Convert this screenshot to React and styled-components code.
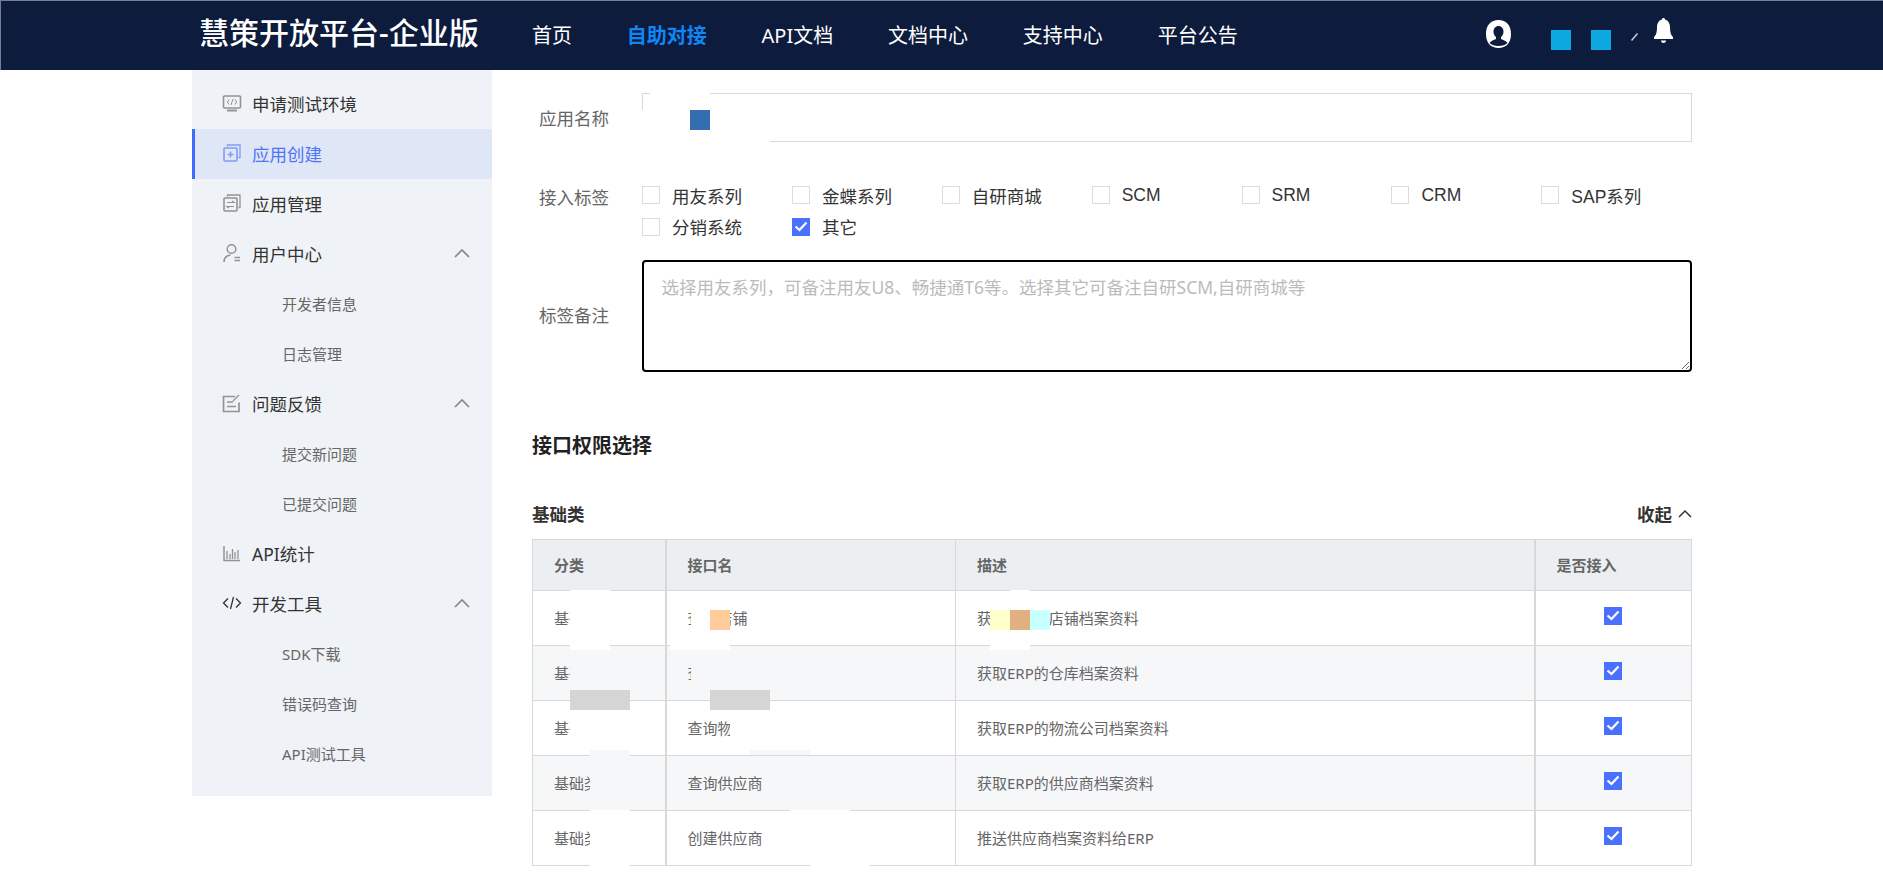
import React from 'react';
import styled, { createGlobalStyle } from 'styled-components';

const FONT = '"Noto Sans", "Noto Sans CJK SC", "Liberation Sans", sans-serif';

const GlobalStyle = createGlobalStyle`
  html, body {
    margin: 0;
    padding: 0;
    background: #fff;
    font-family: ${FONT};
  }
  * {
    box-sizing: border-box;
  }
`;

const Page = styled.div`
  position: relative;
  width: 1883px;
  height: 873px;
  overflow: hidden;
`;

const Header = styled.header`
  display: flex;
  align-items: center;
  height: 70px;
  padding-left: 198px;
  background: #0d1b3d;
  border-top: 1px solid #757d90;
  border-left: 1px solid #757d90;
`;

const Logo = styled.div`
  width: 333px;
  margin-top: -6px;
  font-size: 30px;
  font-weight: 500;
  line-height: 40px;
  color: #fff;
`;

const Nav = styled.nav`
  display: flex;
  gap: 54.8px;
`;

const NavItem = styled.a`
  font-size: 20px;
  line-height: 28px;
  color: ${({ $active }) => ($active ? '#0f87f5' : '#fff')};
  font-weight: ${({ $active }) => ($active ? 700 : 400)};
`;

const HeaderRight = styled.div`
  display: flex;
  align-items: flex-start;
  height: 100%;
  margin-left: 248px;
  padding-top: 17px;
`;

const Square = styled.span`
  width: 20px;
  height: 20px;
  margin-top: 12px;
  margin-right: 20px;
  background: #0ea8e0;
`;

const UserIcon = styled.svg`
  width: 25px;
  height: 28px;
  margin-top: 2px;
  margin-right: 40px;
`;

const Slash = styled.svg`
  width: 7px;
  height: 8px;
  margin-top: 15px;
  margin-right: 16px;
`;

const BellIcon = styled.svg`
  width: 19px;
  height: 26px;
`;

const Body = styled.div`
  display: flex;
  align-items: flex-start;
  padding-left: 192px;
`;

const Sidebar = styled.aside`
  width: 300px;
  padding: 9px 0 17px;
  background: #eff2f6;
`;

const SideRow = styled.div`
  display: flex;
  align-items: center;
  height: 50px;
  padding-left: ${({ $active }) => ($active ? '27px' : '30px')};
  padding-bottom: 2px;
  background: ${({ $active }) => ($active ? '#dfe6f5' : 'transparent')};
  border-left: ${({ $active }) => ($active ? '3px solid #3f6cff' : 'none')};
  font-size: 17.5px;
  color: ${({ $active }) => ($active ? '#4d75f5' : '#333')};
`;

const SideIcon = styled.svg`
  flex: none;
  width: 20px;
  height: 20px;
  margin-right: 10px;
  color: ${({ $active }) => ($active ? '#7f9cf5' : '#939393')};
`;

const Chevron = styled.svg`
  flex: none;
  width: 16px;
  height: 10px;
  margin-left: auto;
  margin-right: 22px;
  color: #888;
`;

const SubRow = styled.div`
  display: flex;
  align-items: center;
  height: 50px;
  padding-left: 90px;
  padding-bottom: 2px;
  font-size: 15px;
  color: #666;
`;

const Main = styled.main`
  width: 1160px;
  margin-left: 40px;
  padding-top: 23px;
`;

const FormRow = styled.div`
  display: flex;
  align-items: ${({ $top }) => ($top ? 'flex-start' : 'center')};
  margin-bottom: ${({ $gap }) => $gap}px;
`;

const FormLabel = styled.label`
  flex: none;
  width: 110px;
  padding-left: 7px;
  padding-top: ${({ $drop }) => $drop || 0}px;
  padding-bottom: ${({ $lift }) => $lift || 0}px;
  font-size: 17.5px;
  line-height: 26px;
  color: #666;
`;

const TextInput = styled.input`
  width: 1050px;
  height: 49px;
  border: 1px solid #d8d8d8;
  outline: none;
  background: #fff;
`;

const TagGrid = styled.div`
  display: grid;
  grid-template-columns: repeat(7, 149.9px);
  grid-auto-rows: 31.5px;
`;

const Tag = styled.div`
  display: flex;
  align-items: center;
  padding-bottom: 1px;
  font-family: "Liberation Sans", "Noto Sans CJK SC", sans-serif;
  font-size: 17.5px;
  color: #333;
`;

const CheckBox = styled.span`
  display: flex;
  flex: none;
  align-items: center;
  justify-content: center;
  width: 18px;
  height: 18px;
  margin-right: ${({ $gap }) => $gap || 0}px;
  background: ${({ $checked }) => ($checked ? '#4a70ff' : '#fff')};
  border: ${({ $checked }) => ($checked ? 'none' : '1px solid #dcdcdc')};
`;

const Remark = styled.textarea`
  display: block;
  width: 1050px;
  height: 112px;
  padding: 11px 17.5px;
  border: 2.5px solid #000;
  border-radius: 4px;
  outline: none;
  font-family: ${FONT};
  font-size: 17.5px;
  line-height: 28px;
  &::placeholder {
    color: #bbb;
  }
`;

const SectionTitle = styled.h2`
  margin: 59px 0 40px;
  font-size: 20px;
  font-weight: 700;
  line-height: 30px;
  color: #222;
`;

const GroupHead = styled.div`
  display: flex;
  align-items: center;
  justify-content: space-between;
  height: 24px;
  margin-bottom: 14px;
  font-size: 17.5px;
  font-weight: 700;
  color: #333;
`;

const Collapse = styled.span`
  display: flex;
  align-items: center;
  gap: 6px;
`;

const CollapseIcon = styled.svg`
  width: 14px;
  height: 9px;
  color: #333;
`;

const Table = styled.table`
  width: 1159px;
  border-collapse: collapse;
  table-layout: fixed;
  font-size: 15px;
  color: #666;
`;

const Th = styled.th`
  width: ${({ $w }) => $w}px;
  height: 51px;
  padding: 0 0 2px 21px;
  background: #eceff2;
  border: 1px solid #d8d8d8;
  border-left-width: ${({ $thick }) => ($thick ? 2 : 1)}px;
  font-weight: 700;
  text-align: left;
`;

const Td = styled.td`
  height: 55px;
  padding: 0 0 2px 21px;
  border: 1px solid #d8d8d8;
  border-left-width: ${({ $thick }) => ($thick ? 2 : 1)}px;
  background: ${({ $alt }) => ($alt ? '#f6f7f9' : '#fff')};
`;

const CheckCell = styled(Td)`
  padding: 0 0 5px;
  & > span {
    margin: 0 auto;
  }
`;

// redaction patches lying over the screenshot content
const Mask = styled.div`
  position: absolute;
  left: ${({ $x }) => $x}px;
  top: ${({ $y }) => $y}px;
  width: ${({ $w }) => $w}px;
  height: ${({ $h }) => $h}px;
  background: ${({ $c }) => $c};
`;

const MASKS = [
  [650, 92, 60, 18, '#fff'],
  [641, 110, 49, 33, '#fff'],
  [710, 110, 60, 33, '#fff'],
  [690, 130, 20, 13, '#fff'],
  [690, 110, 20, 20, '#356eb0'],
  [570, 590, 40, 60, '#fff'],
  [570, 650, 60, 40, '#f6f7f9'],
  [570, 690, 60, 20, '#d5d5d5'],
  [570, 710, 60, 40, '#fff'],
  [590, 750, 40, 60, '#f6f7f9'],
  [590, 810, 40, 60, '#fff'],
  [691, 600, 19, 45, '#fff'],
  [710, 610, 20, 20, '#ffcc99'],
  [670, 645, 60, 5, '#fff'],
  [691, 650, 59, 40, '#f6f7f9'],
  [710, 690, 60, 20, '#d5d5d5'],
  [730, 710, 60, 40, '#fff'],
  [750, 750, 60, 5, '#f6f7f9'],
  [790, 810, 60, 5, '#fff'],
  [810, 865, 60, 8, '#fff'],
  [990, 610, 20, 20, '#ffffcc'],
  [1010, 610, 20, 20, '#e0b080'],
  [1030, 610, 20, 20, '#c8ffff'],
  [1010, 590, 20, 20, '#fff'],
  [990, 630, 40, 20, '#fff'],
];

const MonitorGlyph = () => (
  <>
    <rect x="1.500" y="3" width="17" height="12" rx="1" fill="none" stroke="currentColor" strokeWidth="1.600" />
    <path d="M5 17.500h10" stroke="currentColor" strokeWidth="2" />
    <path d="M7 6.500 5.500 9 7 11.500M13 6.500 14.500 9 13 11.500M11 6 9 12" fill="none" stroke="currentColor" strokeWidth="1" />
  </>
);

const CreateGlyph = () => (
  <>
    <path d="M5.500 3.500V2h12.500v12.500h-1.500" fill="none" stroke="currentColor" strokeWidth="1.300" />
    <rect x="2" y="5" width="13" height="13" rx="1" fill="none" stroke="currentColor" strokeWidth="1.600" />
    <path d="M8.500 8.500v6M5.500 11.500h6" stroke="currentColor" strokeWidth="1.600" />
  </>
);

const ManageGlyph = () => (
  <>
    <path d="M5.500 3.500V2h12.500v12.500h-1.500" fill="none" stroke="currentColor" strokeWidth="1.300" />
    <rect x="2" y="5" width="13" height="13" rx="1" fill="none" stroke="currentColor" strokeWidth="1.600" />
    <path d="M5 9.500h7l-2-1.500M12 13.500H5l2 1.500" fill="none" stroke="currentColor" strokeWidth="1.200" />
  </>
);

const UserGlyph = () => (
  <>
    <circle cx="9.500" cy="6" r="4.300" fill="none" stroke="currentColor" strokeWidth="1.500" />
    <path d="M2 19c0-4.500 2.500-6.500 6.500-7" fill="none" stroke="currentColor" strokeWidth="1.700" />
    <path d="M12.500 14.500h5.500M12.500 17.500h5.500" stroke="currentColor" strokeWidth="1.400" />
  </>
);

const FeedbackGlyph = () => (
  <>
    <path d="M17 9.500V18.500H1.500V3.500H13" fill="none" stroke="currentColor" strokeWidth="1.700" />
    <path d="M5 9h6M5 13.500h9M11 8l6-6" fill="none" stroke="currentColor" strokeWidth="1.400" />
  </>
);

const ChartGlyph = () => (
  <>
    <path d="M2 3v14.500h16" fill="none" stroke="currentColor" strokeWidth="1.500" />
    <path d="M5 8v8M8 11v5M10.500 6v10M13 9v7M16 7v9" stroke="currentColor" strokeWidth="1.300" />
  </>
);

const CodeGlyph = () => (
  <path d="M6 5.500 1.500 10 6 14.500M14 5.500 18.500 10 14 14.500M11.500 4 8.500 16" fill="none" stroke="#333" strokeWidth="1.300" />
);

const SIDE_ITEMS = [
  { label: '申请测试环境', Glyph: MonitorGlyph },
  { label: '应用创建', Glyph: CreateGlyph, active: true },
  { label: '应用管理', Glyph: ManageGlyph },
  { label: '用户中心', Glyph: UserGlyph, subs: ['开发者信息', '日志管理'] },
  { label: '问题反馈', Glyph: FeedbackGlyph, subs: ['提交新问题', '已提交问题'] },
  { label: 'API统计', Glyph: ChartGlyph },
  { label: '开发工具', Glyph: CodeGlyph, subs: ['SDK下载', '错误码查询', 'API测试工具'] },
];

const NAV_ITEMS = ['首页', '自助对接', 'API文档', '文档中心', '支持中心', '平台公告'];
const TAGS = ['用友系列', '金蝶系列', '自研商城', 'SCM', 'SRM', 'CRM', 'SAP系列', '分销系统', '其它'];

const ROWS = [
  ['基础类', '查询店铺', '获取ERP的店铺档案资料'],
  ['基础类', '查询仓库', '获取ERP的仓库档案资料'],
  ['基础类', '查询物流公司', '获取ERP的物流公司档案资料'],
  ['基础类', '查询供应商', '获取ERP的供应商档案资料'],
  ['基础类', '创建供应商', '推送供应商档案资料给ERP'],
];

const Tick = () => (
  <svg width="14" height="11" viewBox="0 0 14 11">
    <path d="M1.500 5.500 5.500 9 12.500 1.500" fill="none" stroke="#fff" strokeWidth="2.200" />
  </svg>
);

function Side() {
  return (
    <Sidebar>
      {SIDE_ITEMS.map(({ label, Glyph, active, subs }) => (
        <React.Fragment key={label}>
          <SideRow $active={active}>
            <SideIcon $active={active} viewBox="0 0 20 20">
              <Glyph />
            </SideIcon>
            {label}
            {subs && (
              <Chevron viewBox="0 0 16 10">
                <path d="M1 9 8 2l7 7" fill="none" stroke="currentColor" strokeWidth="1.700" />
              </Chevron>
            )}
          </SideRow>
          {subs && subs.map((sub) => <SubRow key={sub}>{sub}</SubRow>)}
        </React.Fragment>
      ))}
    </Sidebar>
  );
}

export default function App() {
  return (
    <Page>
      <GlobalStyle />
      <Header>
        <Logo>慧策开放平台-企业版</Logo>
        <Nav>
          {NAV_ITEMS.map((item) => (
            <NavItem key={item} $active={item === '自助对接'}>
              {item}
            </NavItem>
          ))}
        </Nav>
        <HeaderRight>
          <UserIcon viewBox="0 0 25 28">
            <path
              fillRule="evenodd"
              fill="#fff"
              d="M12.500 0C20 0 25 5 25 14s-5 14-12.500 14S0 23 0 14 5 0 12.500 0Zm0 6c-3 0-5 2.500-5 5.500 0 2.500 1 4.500 2.500 5.500v2c-2.500 1-5.500 2-6.500 4 2 2 5 3 9 3s7-1 9-3c-1-2-4-3-6.500-4v-2c1.500-1 2.500-3 2.500-5.500C17.500 8.500 15.500 6 12.500 6Z"
            />
          </UserIcon>
          <Square />
          <Square />
          <Slash viewBox="0 0 7 8">
            <path d="M.5 7.500 6.500.5" stroke="#cfd3db" strokeWidth="1.500" />
          </Slash>
          <BellIcon viewBox="0 0 19 26">
            <path
              fill="#fff"
              d="M9.500 0c1 0 1.500.6 1.500 1.500C14.500 2.500 16 5.500 16 9.500c0 5 1 7.500 3 9.500v2H0v-2c2-2 3-4.500 3-9.500C3 5.500 4.500 2.500 8 1.500 8 .6 8.500 0 9.500 0ZM7 22.500h5c0 1.500-1 2.500-2.500 2.500S7 24 7 22.500Z"
            />
          </BellIcon>
        </HeaderRight>
      </Header>
      <Body>
        <Side />
        <Main>
          <FormRow $gap={38}>
            <FormLabel>应用名称</FormLabel>
            <TextInput readOnly />
          </FormRow>
          <FormRow $gap={17} $top>
            <FormLabel $drop={4}>接入标签</FormLabel>
            <TagGrid>
              {TAGS.map((tag) => (
                <Tag key={tag}>
                  <CheckBox $gap={12} $checked={tag === '其它'}>
                    {tag === '其它' && <Tick />}
                  </CheckBox>
                  {tag}
                </Tag>
              ))}
            </TagGrid>
          </FormRow>
          <FormRow $gap={0}>
            <FormLabel $lift={2}>标签备注</FormLabel>
            <Remark placeholder="选择用友系列，可备注用友U8、畅捷通T6等。选择其它可备注自研SCM,自研商城等" />
          </FormRow>
          <SectionTitle>接口权限选择</SectionTitle>
          <GroupHead>
            基础类
            <Collapse>
              收起
              <CollapseIcon viewBox="0 0 14 9">
                <path d="M1 8 7 2l6 6" fill="none" stroke="currentColor" strokeWidth="1.500" />
              </CollapseIcon>
            </Collapse>
          </GroupHead>
          <Table>
            <thead>
              <tr>
                <Th $w={133}>分类</Th>
                <Th $w={290} $thick>接口名</Th>
                <Th $w={579}>描述</Th>
                <Th $w={157} $thick>是否接入</Th>
              </tr>
            </thead>
            <tbody>
              {ROWS.map((row, i) => (
                <tr key={row[1]}>
                  <Td $alt={i % 2 === 1}>{row[0]}</Td>
                  <Td $alt={i % 2 === 1} $thick>{row[1]}</Td>
                  <Td $alt={i % 2 === 1}>{row[2]}</Td>
                  <CheckCell $alt={i % 2 === 1} $thick>
                    <CheckBox $checked>
                      <Tick />
                    </CheckBox>
                  </CheckCell>
                </tr>
              ))}
            </tbody>
          </Table>
        </Main>
      </Body>
      {MASKS.map(([x, y, w, h, c]) => (
        <Mask key={`${x}-${y}-${c}`} $x={x} $y={y} $w={w} $h={h} $c={c} />
      ))}
    </Page>
  );
}
